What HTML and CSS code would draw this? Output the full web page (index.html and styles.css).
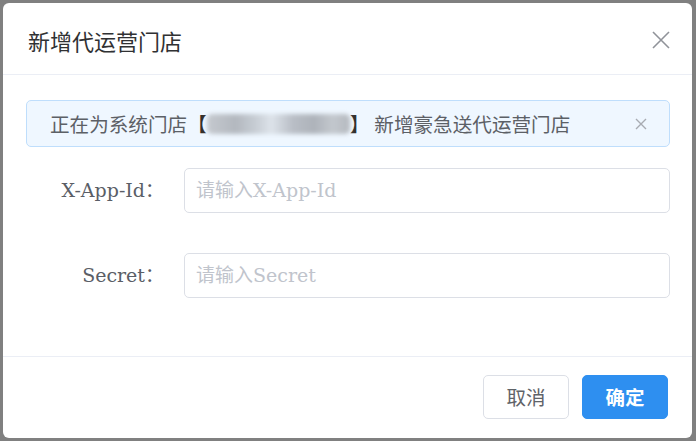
FILE: index.html
```html
<!DOCTYPE html>
<html lang="zh-CN">
<head>
<meta charset="utf-8">
<title>新增代运营门店</title>
<link rel="stylesheet" href="styles.css">
</head>
<body>
<div class="dialog">
  <div class="dialog-header">
    <span class="dialog-title">新增代运营门店</span>
    <button class="icon-close" aria-label="关闭">
      <svg width="18" height="18" viewBox="0 0 18 18"><path d="M1 1 L17 17 M17 1 L1 17" stroke="#909399" stroke-width="1.6" fill="none"/></svg>
    </button>
  </div>
  <div class="dialog-body">
    <div class="alert">
      <span class="alert-text">正在为系统门店<span class="bracket">【</span><span class="masked"></span><span class="bracket bracket-r">】</span>新增豪急送代运营门店</span>
      <span class="alert-close">
        <svg width="12" height="12" viewBox="0 0 12 12"><path d="M1 1 L11 11 M11 1 L1 11" stroke="#a8abb2" stroke-width="1.4" fill="none"/></svg>
      </span>
    </div>
    <div class="form">
      <div class="form-row">
        <label class="form-label">X-App-Id：</label>
        <div class="input"><span class="placeholder">请输入X-App-Id</span></div>
      </div>
      <div class="form-row">
        <label class="form-label">Secret：</label>
        <div class="input"><span class="placeholder">请输入Secret</span></div>
      </div>
    </div>
  </div>
  <div class="dialog-footer">
    <button class="btn btn-default">取消</button>
    <button class="btn btn-primary">确定</button>
  </div>
</div>
</body>
</html>
```
FILE: styles.css
```css
* { box-sizing: border-box; }
html, body { margin: 0; padding: 0; }
body {
  background: #808080;
  width: 696px;
  height: 441px;
  overflow: hidden;
  font-family: "DejaVu Serif", "Noto Sans CJK SC", serif;
  padding: 3px 4px 3px 3px;
}
.dialog {
  width: 689px;
  height: 435px;
  background: #fff;
  border-radius: 6px;
  display: flex;
  flex-direction: column;
}
.dialog-header {
  height: 72px;
  border-bottom: 1px solid #ebeef5;
  display: flex;
  align-items: center;
  justify-content: space-between;
  padding: 2px 22px 0 25px;
}
.dialog-title {
  font-family: "Noto Sans CJK SC", sans-serif;
  font-size: 22px;
  color: #303133;
  line-height: 1;
}
.icon-close {
  border: 0;
  background: none;
  padding: 0;
  width: 18px;
  height: 18px;
  display: flex;
}
.dialog-body {
  flex: 1;
  padding: 25px 22px 0 23px;
}
.alert {
  height: 47px;
  background: #eff7ff;
  border: 1px solid #bfdefc;
  border-radius: 5px;
  display: flex;
  align-items: center;
  justify-content: space-between;
  padding: 0 22px 0 23px;
}
.alert-text {
  font-family: "Noto Sans CJK SC", sans-serif;
  font-size: 19.6px;
  color: #5c6066;
  display: flex;
  align-items: center;
  line-height: 1;
}
.bracket { color: #34302c; }
.masked {
  display: inline-block;
  width: 143px;
  height: 20px;
  background: linear-gradient(90deg, #c5c9cf 0%, #b3b8bf 20%, #c9cfd6 35%, #dde3ea 45%, #b9bec6 60%, #aeb3ba 75%, #c3c8ce 88%, #b5b9bf 100%);
  filter: blur(2px);
  border-radius: 5px;
}
.bracket-r { margin-right: 5px; }
.alert-close { display: flex; }
.form { padding-top: 21px; display: flex; flex-direction: column; gap: 40px; }
.form-row { display: flex; align-items: center; }
.form-label {
  width: 138px;
  margin-right: 20px;
  text-align: right;
  font-size: 19px;
  color: #5a5e66;
  line-height: 1;
}
.input {
  flex: 1;
  height: 45px;
  border: 1px solid #dcdfe6;
  border-radius: 5px;
  display: flex;
  align-items: center;
  padding-left: 11px;
}
.placeholder {
  font-size: 19px;
  color: #c0c4cc;
  line-height: 1;
}
.dialog-footer {
  height: 82px;
  border-top: 1px solid #ebeef5;
  display: flex;
  justify-content: flex-end;
  align-items: center;
  gap: 13px;
  padding: 0 24px 2px 0;
}
.btn {
  width: 86px;
  height: 44px;
  border-radius: 5px;
  font-family: "Noto Sans CJK SC", sans-serif;
  font-size: 19.5px;
  line-height: 1;
  padding: 0;
}
.btn-default {
  background: #fff;
  border: 1px solid #dcdfe6;
  color: #5f6368;
}
.btn-primary {
  background: #2e8ff0;
  border: 1px solid #2e8ff0;
  color: #fff;
  font-weight: 700;
}
```
